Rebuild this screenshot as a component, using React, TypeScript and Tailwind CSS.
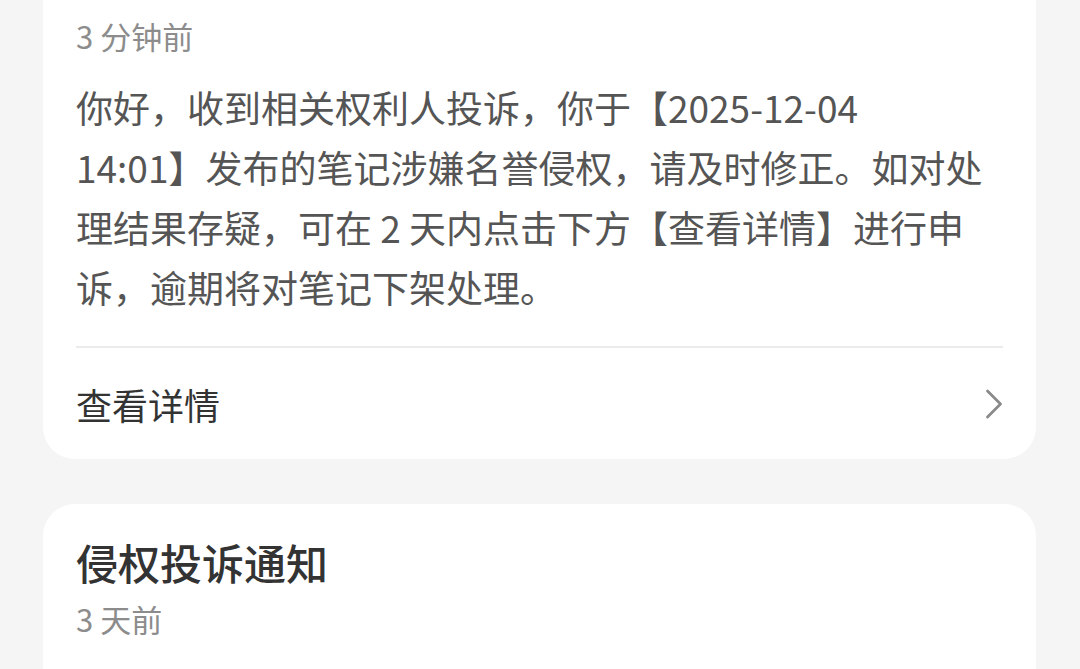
import { ChevronRight } from "lucide-react";

const font = { fontFamily: '"Noto Sans CJK SC", "Noto Sans", sans-serif' };

const bodyLines = [
  "你好，收到相关权利人投诉，你于【2025-12-04",
  "14:01】发布的笔记涉嫌名誉侵权，请及时修正。如对处",
  "理结果存疑，可在 2 天内点击下方【查看详情】进行申",
  "诉，逾期将对笔记下架处理。",
];

export default function App() {
  return (
    <div
      className="h-[669px] w-[1080px] overflow-hidden bg-[#f5f5f5]"
      style={font}
    >
      <div className="mx-[43px] w-[993px] rounded-b-[32px] bg-white px-[33px] pt-[16px]">
        <div className="text-[31px] leading-[40px] text-[#8c8c8c]">3 分钟前</div>
        <div className="mt-[21px] text-[37px] leading-[60px] text-[#555]">
          {bodyLines.map((line) => (
            <div key={line} className="whitespace-nowrap">
              {line}
            </div>
          ))}
        </div>
        <div className="mt-[29px] h-[2px] bg-[#ebebeb]" />
        <div className="flex h-[111px] items-center justify-between">
          <span className="text-[36px] text-[#333]">查看详情</span>
          <ChevronRight
            className="-mr-[17px] h-[52px] w-[52px] text-[#8a8a8a]"
            strokeWidth={1.3}
          />
        </div>
      </div>

      <div className="mx-[43px] mt-[45px] w-[993px] rounded-t-[32px] bg-white px-[33px] pt-[33px] pb-[40px]">
        <div className="text-[42px] font-medium leading-[50px] text-[#333]">
          侵权投诉通知
        </div>
        <div className="mt-[12px] text-[31px] leading-[40px] text-[#8c8c8c]">
          3 天前
        </div>
      </div>
    </div>
  );
}
